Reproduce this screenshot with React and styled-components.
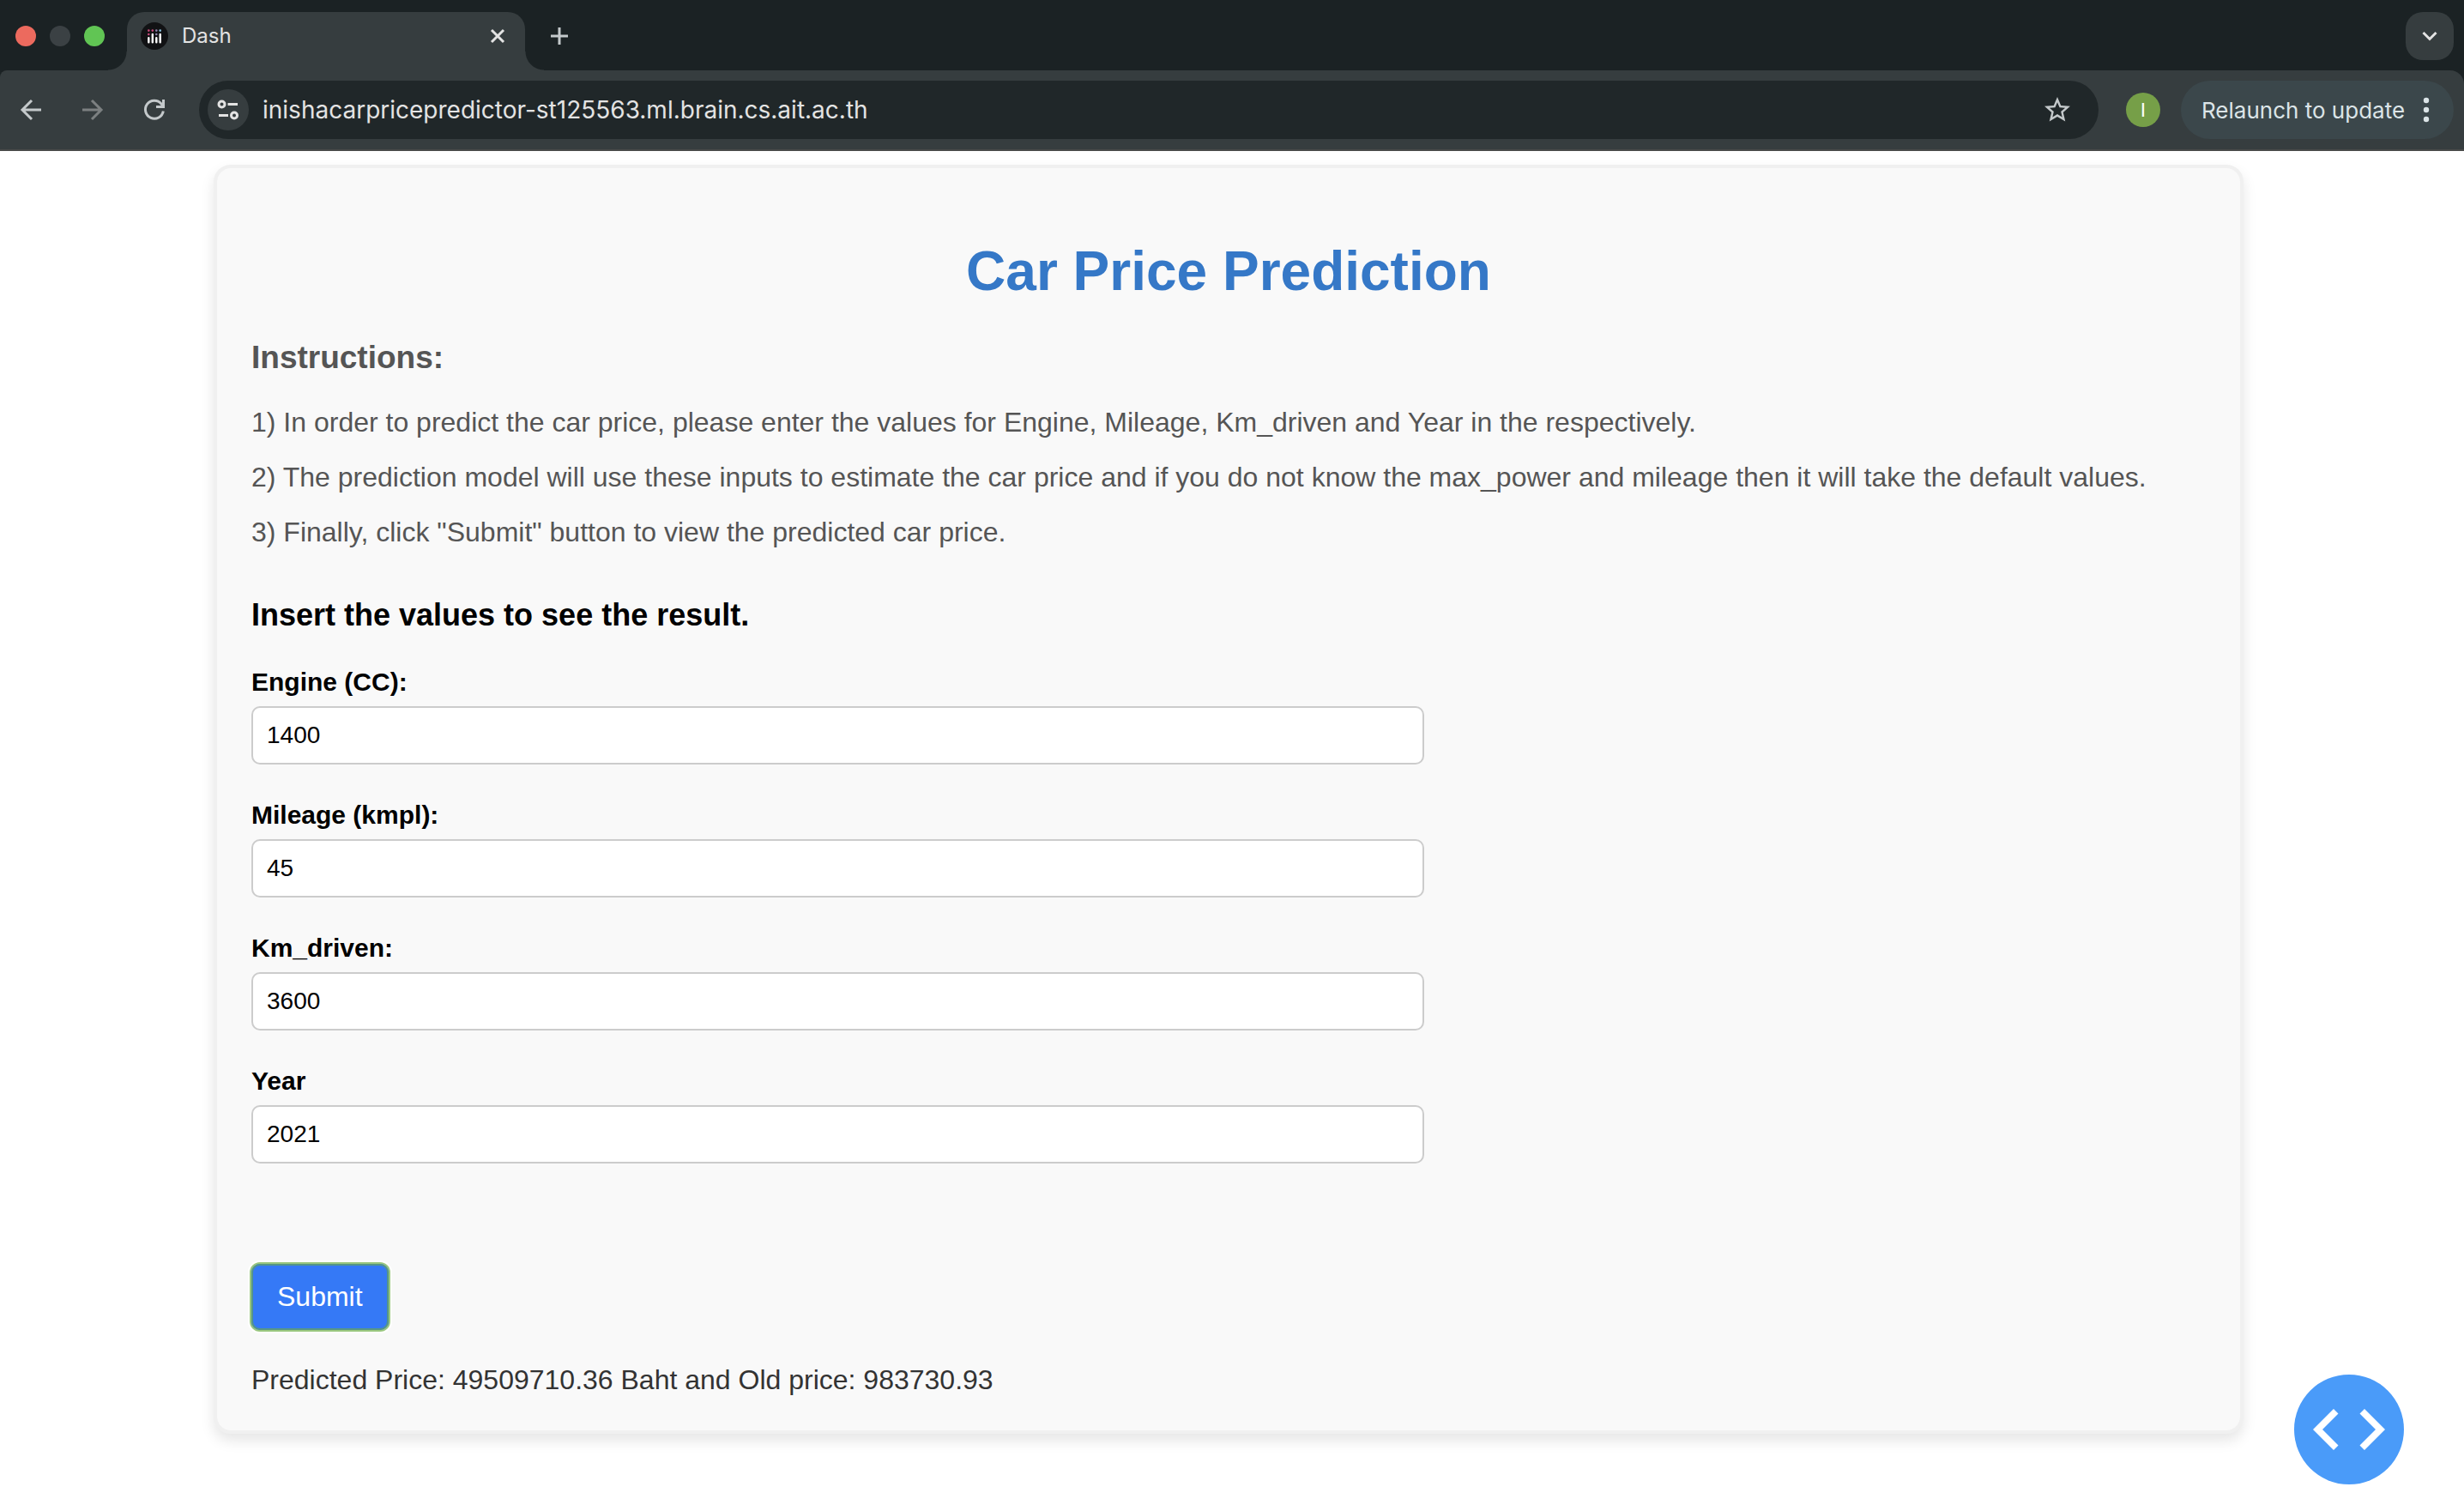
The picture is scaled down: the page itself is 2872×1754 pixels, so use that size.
import React, { useState } from "react";
import styled, { createGlobalStyle } from "styled-components";

const GlobalStyle = createGlobalStyle`
  *, *::before, *::after { box-sizing: border-box; }
  body { margin: 0; background: #ffffff; font-family: "Liberation Sans", Arial, sans-serif; }
  button, input { font: inherit; margin: 0; }
  h1, h2, h3, p { margin: 0; }
`;

const Browser = styled.header`
  background: #1b2224;
  font-family: Inter, Roboto, sans-serif;
`;

const TabStrip = styled.div`
  display: flex;
  align-items: center;
  height: 82px;
  padding: 2px 12px 0 18px;
`;

const Lights = styled.div`
  display: flex;
  gap: 16px;
  margin-right: 26px;
`;

const Light = styled.button`
  width: 24px;
  height: 24px;
  padding: 0;
  border: 0;
  border-radius: 50%;
  background: ${(p) => p.$color};
`;

const Tab = styled.div`
  position: relative;
  display: flex;
  align-items: center;
  align-self: flex-end;
  width: 464px;
  height: 68px;
  padding: 0 16px 12px;
  margin-right: 20px;
  border-radius: 20px 20px 0 0;
  background: #363d3f;
  color: #e3e3e3;
  font-size: 24px;

  &::before, &::after {
    content: "";
    position: absolute;
    bottom: 0;
    width: 22px;
    height: 22px;
  }
  &::before {
    right: 100%;
    background: radial-gradient(circle at 0 0, transparent 21px, #363d3f 22px);
  }
  &::after {
    left: 100%;
    background: radial-gradient(circle at 100% 0, transparent 21px, #363d3f 22px);
  }
`;

const TabTitle = styled.span`
  flex: 1;
  padding-left: 16px;
  line-height: 32px;
`;

const IconButton = styled.button`
  display: flex;
  align-items: center;
  justify-content: center;
  flex: none;
  width: ${(p) => p.$size || 40}px;
  height: ${(p) => p.$size || 40}px;
  padding: 0;
  border: 0;
  border-radius: ${(p) => p.$radius || "50%"};
  background: ${(p) => p.$bg || "transparent"};
  color: ${(p) => p.$color || "#c4c9cb"};
`;

const Spacer = styled.div`
  flex: 1;
`;

const Toolbar = styled.div`
  display: flex;
  align-items: center;
  height: 94px;
  padding: 0 12px 0 16px;
  border-bottom: 2px solid #484a49;
  border-radius: 8px 16px 0 0;
  background: #363d3f;
`;

const NavButtons = styled.nav`
  display: flex;
  gap: 32px;
  margin-right: 32px;
`;

const AddressBar = styled.label`
  display: flex;
  flex: 1;
  align-items: center;
  height: 68px;
  padding: 0 28px 0 10px;
  border-radius: 34px;
  background: #202729;
`;

const AddressInput = styled.input`
  flex: 1;
  min-width: 0;
  height: 48px;
  padding: 0 0 0 16px;
  border: 0;
  outline: 0;
  background: transparent;
  color: #e3e3e3;
  font-size: 28px;
`;

const Avatar = styled.button`
  width: 40px;
  height: 40px;
  margin: 0 24px 0 32px;
  padding: 0;
  border: 0;
  border-radius: 50%;
  background: #769f48;
  color: #ffffff;
  font-size: 22px;
`;

const Relaunch = styled.button`
  display: flex;
  align-items: center;
  justify-content: space-between;
  width: 318px;
  height: 68px;
  padding: 0 28px 0 24px;
  border: 0;
  border-radius: 34px;
  background: #3b474b;
  color: #dbe4e7;
  font-size: 26px;
  white-space: nowrap;
`;

const Page = styled.main`
  padding: 16px 257px 84px 249px;
`;

const Card = styled.section`
  display: flex;
  flex-direction: column;
  align-items: flex-start;
  padding: 40px;
  border: 4px solid #f0f0f0;
  border-radius: 20px;
  background: #f9f9f9;
  box-shadow: 0 8px 16px rgba(0, 0, 0, 0.1);
`;

const Title = styled.h1`
  align-self: stretch;
  padding: 40px 0 36px;
  color: #3578c7;
  font-size: 64px;
  line-height: 80px;
  text-align: center;
`;

const Instructions = styled.div`
  padding-bottom: 40px;
  color: #555555;
`;

const InstructionsTitle = styled.h2`
  padding-bottom: 18px;
  font-size: 37px;
  line-height: 50px;
`;

const Step = styled.p`
  font-size: 32px;
  line-height: 64px;
`;

const Form = styled.form`
  display: flex;
  flex-direction: column;
  align-items: flex-start;
  gap: 39px;
  width: 100%;
`;

const FormTitle = styled.h3`
  margin-bottom: -6px;
  font-size: 36px;
  line-height: 50px;
`;

const Field = styled.div`
  display: flex;
  flex-direction: column;
  gap: 8px;
  width: 60%;
`;

const FieldLabel = styled.label`
  font-size: 30px;
  font-weight: bold;
  line-height: 40px;
`;

const FieldInput = styled.input`
  height: 68px;
  padding: 0 16px;
  border: 2px solid #cccccc;
  border-radius: 10px;
  background: #ffffff;
  color: #000000;
  font-size: 28px;
`;

const Submit = styled.button`
  height: 77px;
  margin-top: 78px;
  padding: 0 30px;
  border: 0;
  border-radius: 10px;
  background: #3579f6;
  box-shadow: inset 0 0 0 2px #559589, 0 0 0 2px #9ac77f, 0 0 0 4px #ffffff;
  color: #ffffff;
  font-size: 32px;
`;

const Result = styled.output`
  color: #333333;
  font-size: 32px;
  line-height: 38px;
`;

const DebugButton = styled.button`
  position: fixed;
  right: 70px;
  bottom: 24px;
  width: 128px;
  height: 128px;
  padding: 0;
  border: 0;
  border-radius: 50%;
  background: #4a9bf9;
`;

const stroke = { fill: "none", stroke: "currentColor", strokeWidth: 3 };

const Favicon = () => (
  <svg width="32" height="32" viewBox="0 0 32 32" aria-hidden="true">
    <circle cx="16" cy="16" r="16" fill="#111214" />
    <g fill="#c8487a">
      <circle cx="9.3" cy="9.6" r="1.3" />
      <circle cx="13.8" cy="9.6" r="1.3" />
      <circle cx="9.3" cy="14" r="1.3" />
    </g>
    <g fill="#8f84ad">
      <circle cx="18.3" cy="9.6" r="1.3" />
      <circle cx="18.3" cy="14" r="1.3" />
    </g>
    <circle cx="22.700" cy="9.6" r="1.3" fill="#8cc4e2" />
    <path
      d="M9.3 18.200v5M13.800 14v9.200M18.300 18.200v5M22.700 14v9.200"
      stroke="#ffffff"
      strokeWidth="2.4"
      strokeLinecap="round"
    />
  </svg>
);

const CloseIcon = () => (
  <svg width="24" height="24" viewBox="0 0 24 24" {...stroke}><path d="M5 5l14 14M19 5L5 19" /></svg>
);
const PlusIcon = () => (
  <svg width="24" height="24" viewBox="0 0 24 24" {...stroke}><path d="M12 2v20M2 12h20" /></svg>
);
const ChevronIcon = () => (
  <svg width="24" height="24" viewBox="0 0 24 24" {...stroke}><path d="M4.500 8l7.500 7.500L19.500 8" /></svg>
);
const BackIcon = () => (
  <svg width="32" height="32" viewBox="0 0 32 32" {...stroke}><path d="M28 16H6M17 5L6 16l11 11" /></svg>
);
const ForwardIcon = () => (
  <svg width="32" height="32" viewBox="0 0 32 32" {...stroke}><path d="M4 16h22M15 5l11 11-11 11" /></svg>
);
const ReloadIcon = () => (
  <svg width="32" height="32" viewBox="0 0 32 32" {...stroke}>
    <path d="M26.300 17.500A10.500 10.500 0 1 1 24 9l2.500 3M26.500 4v8.500h-8.500" />
  </svg>
);
const SiteIcon = () => (
  <svg width="28" height="28" viewBox="0 0 28 28" {...stroke}>
    <circle cx="6.500" cy="7.500" r="3.500" /><path d="M13.500 7.500H25M3 20.500h11" /><circle cx="21" cy="20.500" r="3.500" />
  </svg>
);
const StarIcon = () => (
  <svg width="36" height="36" viewBox="0 0 24 24" aria-hidden="true">
    <path fill="currentColor" d="M22 9.240l-7.190-.62L12 2 9.190 8.630 2 9.240l5.460 4.730L5.820 21 12 17.270 18.180 21l-1.630-7.030L22 9.240zM12 15.400l-3.760 2.270 1-4.280-3.320-2.880 4.380-.38L12 6.100l1.710 4.040 4.380.38-3.320 2.880 1 4.280L12 15.400z" />
  </svg>
);
const DotsIcon = () => (
  <svg width="8" height="32" viewBox="0 0 8 32" fill="currentColor">
    <circle cx="4" cy="5" r="3.200" /><circle cx="4" cy="16" r="3.200" /><circle cx="4" cy="27" r="3.200" />
  </svg>
);
const CodeIcon = () => (
  <svg width="128" height="128" viewBox="0 0 128 128" fill="#ffffff">
    <path d="M22 64l24-24 5.500 5.500L33 64l18.500 18.500L46 88zM106 64L82 40l-5.500 5.500L95 64 76.500 82.500 82 88z" />
  </svg>
);

const steps = [
  "1) In order to predict the car price, please enter the values for Engine, Mileage, Km_driven and Year in the respectively.",
  "2) The prediction model will use these inputs to estimate the car price and if you do not know the max_power and mileage then it will take the default values.",
  "3) Finally, click \"Submit\" button to view the predicted car price.",
];

const fields = [
  { id: "engine", label: "Engine (CC):", value: "1400" },
  { id: "mileage", label: "Mileage (kmpl):", value: "45" },
  { id: "km_driven", label: "Km_driven:", value: "3600" },
  { id: "year", label: "Year", value: "2021" },
];

export default function App() {
  const [url, setUrl] = useState("inishacarpricepredictor-st125563.ml.brain.cs.ait.ac.th");

  return (
    <>
      <GlobalStyle />
      <Browser>
        <TabStrip>
          <Lights>
            <Light $color="#ec6a5e" aria-label="Close window" />
            <Light $color="#3b4144" aria-label="Minimize window" />
            <Light $color="#61c554" aria-label="Zoom window" />
          </Lights>
          <Tab>
            <Favicon />
            <TabTitle>Dash</TabTitle>
            <IconButton $size={32} $color="#e3e3e3" aria-label="Close tab"><CloseIcon /></IconButton>
          </Tab>
          <IconButton aria-label="New tab"><PlusIcon /></IconButton>
          <Spacer />
          <IconButton $size={56} $radius="20px" $bg="#363d3f" $color="#e3e3e3" aria-label="Search tabs">
            <ChevronIcon />
          </IconButton>
        </TabStrip>
        <Toolbar>
          <NavButtons>
            <IconButton aria-label="Back"><BackIcon /></IconButton>
            <IconButton $color="#7c8081" aria-label="Forward"><ForwardIcon /></IconButton>
            <IconButton aria-label="Reload"><ReloadIcon /></IconButton>
          </NavButtons>
          <AddressBar>
            <IconButton $size={48} $bg="#363d3f" $color="#e3e3e3" aria-label="Site information"><SiteIcon /></IconButton>
            <AddressInput aria-label="Address" value={url} onChange={(e) => setUrl(e.target.value)} />
            <IconButton aria-label="Bookmark"><StarIcon /></IconButton>
          </AddressBar>
          <Avatar aria-label="Profile">I</Avatar>
          <Relaunch>Relaunch to update<DotsIcon /></Relaunch>
        </Toolbar>
      </Browser>
      <Page>
        <Card>
          <Title>Car Price Prediction</Title>
          <Instructions>
            <InstructionsTitle>Instructions:</InstructionsTitle>
            {steps.map((step) => <Step key={step}>{step}</Step>)}
          </Instructions>
          <Form onSubmit={(e) => e.preventDefault()}>
            <FormTitle>Insert the values to see the result.</FormTitle>
            {fields.map((f) => (
              <Field key={f.id}>
                <FieldLabel htmlFor={f.id}>{f.label}</FieldLabel>
                <FieldInput id={f.id} defaultValue={f.value} />
              </Field>
            ))}
            <Submit type="submit">Submit</Submit>
            <Result>Predicted Price: 49509710.36 Baht and Old price: 983730.93</Result>
          </Form>
        </Card>
      </Page>
      <DebugButton aria-label="Developer tools"><CodeIcon /></DebugButton>
    </>
  );
}
